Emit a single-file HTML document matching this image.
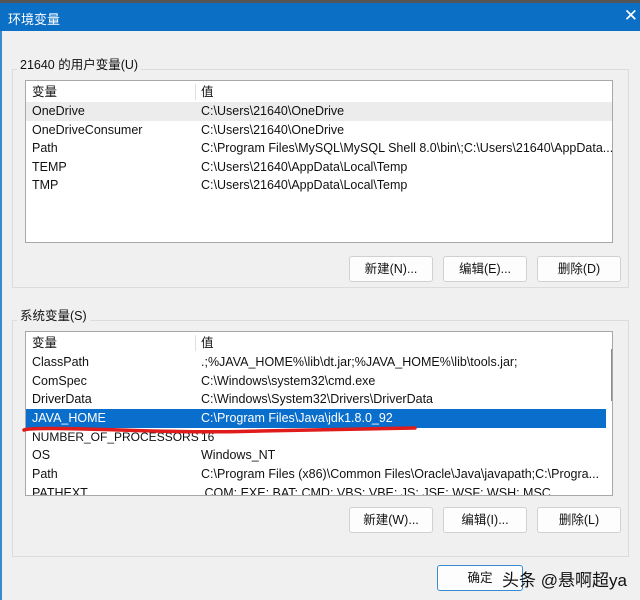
<!DOCTYPE html><html><head><meta charset="utf-8"><style>
body{margin:0;width:640px;height:600px;overflow:hidden;background:#f0f0f0;font-family:"Liberation Sans","Noto Sans CJK SC",sans-serif;font-size:12.5px;color:#111;position:relative}
.a{position:absolute}
.title{left:0;top:0;width:640px;height:31px;background:#0b6fc6;color:#fff;font-size:13px}
.grp{border:1px solid #dcdcdc;}
.list{background:#fff;border:1px solid #a8a8a8}
.row{position:absolute;left:0;padding-left:6px;height:18.5px;line-height:18.5px;white-space:nowrap;width:574px}
.v{position:absolute;left:175px}
.btn{background:#fdfdfd;border:1px solid #d0d0d0;border-radius:3px;text-align:center;line-height:24px;height:24px;width:82px}
</style></head><body>
<div class="a" style="left:0;top:0;width:640px;height:3px;background:#555"></div>
<div class="a title" style="top:3px;height:28px"><span class="a" style="left:8px;top:6px">环境变量</span><span class="a" style="right:2px;top:3px;font-size:17px">✕</span></div>
<div class="a" style="left:0;top:31px;width:2px;height:569px;background:#3a8ad0"></div>
<div class="a grp" style="left:12px;top:69px;width:615px;height:217px"></div>
<div class="a" style="left:17px;top:54px;background:#f0f0f0;padding:0 3px">21640 的用户变量(U)</div>
<div class="a list" style="left:25px;top:80px;width:586px;height:161px;overflow:hidden">
<div class="row" style="top:2px">变量<span class="v">值</span></div>
<div class="a" style="left:169px;top:3px;width:1px;height:16px;background:#e0e0e0"></div>
<div class="row" style="top:21px;width:580px;background:#ececec">OneDrive<span class="v">C:\Users\21640\OneDrive</span></div>
<div class="row" style="top:40px">OneDriveConsumer<span class="v">C:\Users\21640\OneDrive</span></div>
<div class="row" style="top:58px">Path<span class="v">C:\Program Files\MySQL\MySQL Shell 8.0\bin\;C:\Users\21640\AppData...</span></div>
<div class="row" style="top:77px">TEMP<span class="v">C:\Users\21640\AppData\Local\Temp</span></div>
<div class="row" style="top:95px">TMP<span class="v">C:\Users\21640\AppData\Local\Temp</span></div>
</div>
<div class="a btn" style="left:349px;top:256px">新建(N)...</div>
<div class="a btn" style="left:443px;top:256px">编辑(E)...</div>
<div class="a btn" style="left:537px;top:256px">删除(D)</div>
<div class="a grp" style="left:12px;top:320px;width:615px;height:235px"></div>
<div class="a" style="left:17px;top:305px;background:#f0f0f0;padding:0 3px">系统变量(S)</div>
<div class="a list" style="left:25px;top:331px;width:586px;height:163px;overflow:hidden">
<div class="row" style="top:2px">变量<span class="v">值</span></div>
<div class="a" style="left:169px;top:3px;width:1px;height:16px;background:#e0e0e0"></div>
<div class="row" style="top:21px">ClassPath<span class="v">.;%JAVA_HOME%\lib\dt.jar;%JAVA_HOME%\lib\tools.jar;</span></div>
<div class="row" style="top:40px">ComSpec<span class="v">C:\Windows\system32\cmd.exe</span></div>
<div class="row" style="top:58px">DriverData<span class="v">C:\Windows\System32\Drivers\DriverData</span></div>
<div class="row" style="top:77px;background:#0a6fcc;color:#fff">JAVA_HOME<span class="v">C:\Program Files\Java\jdk1.8.0_92</span></div>
<div class="row" style="top:96px;font-size:12px">NUMBER_OF_PROCESSORS<span class="v">16</span></div>
<div class="row" style="top:114px">OS<span class="v">Windows_NT</span></div>
<div class="row" style="top:133px">Path<span class="v">C:\Program Files (x86)\Common Files\Oracle\Java\javapath;C:\Progra...</span></div>
<div class="row" style="top:152px">PATHEXT<span class="v">.COM;.EXE;.BAT;.CMD;.VBS;.VBE;.JS;.JSE;.WSF;.WSH;.MSC</span></div>
<div class="a" style="left:585px;top:17px;width:3px;height:52px;background:#8a8a8a"></div>
</div>
<svg class="a" style="left:0;top:0" width="640" height="600"><path d="M24 430 Q30 427 120 430 T260 431 L415 428" stroke="#e01b1b" stroke-width="3.5" fill="none" stroke-linecap="round"/></svg>
<div class="a btn" style="left:349px;top:507px">新建(W)...</div>
<div class="a btn" style="left:443px;top:507px">编辑(I)...</div>
<div class="a btn" style="left:537px;top:507px">删除(L)</div>
<div class="a btn" style="left:437px;top:565px;width:84px;border:1px solid #3a8ad0">确定</div>
<div class="a" style="left:502px;top:566px;font-size:17px;color:#111">头条 @悬啊超ya</div>
</body></html>
